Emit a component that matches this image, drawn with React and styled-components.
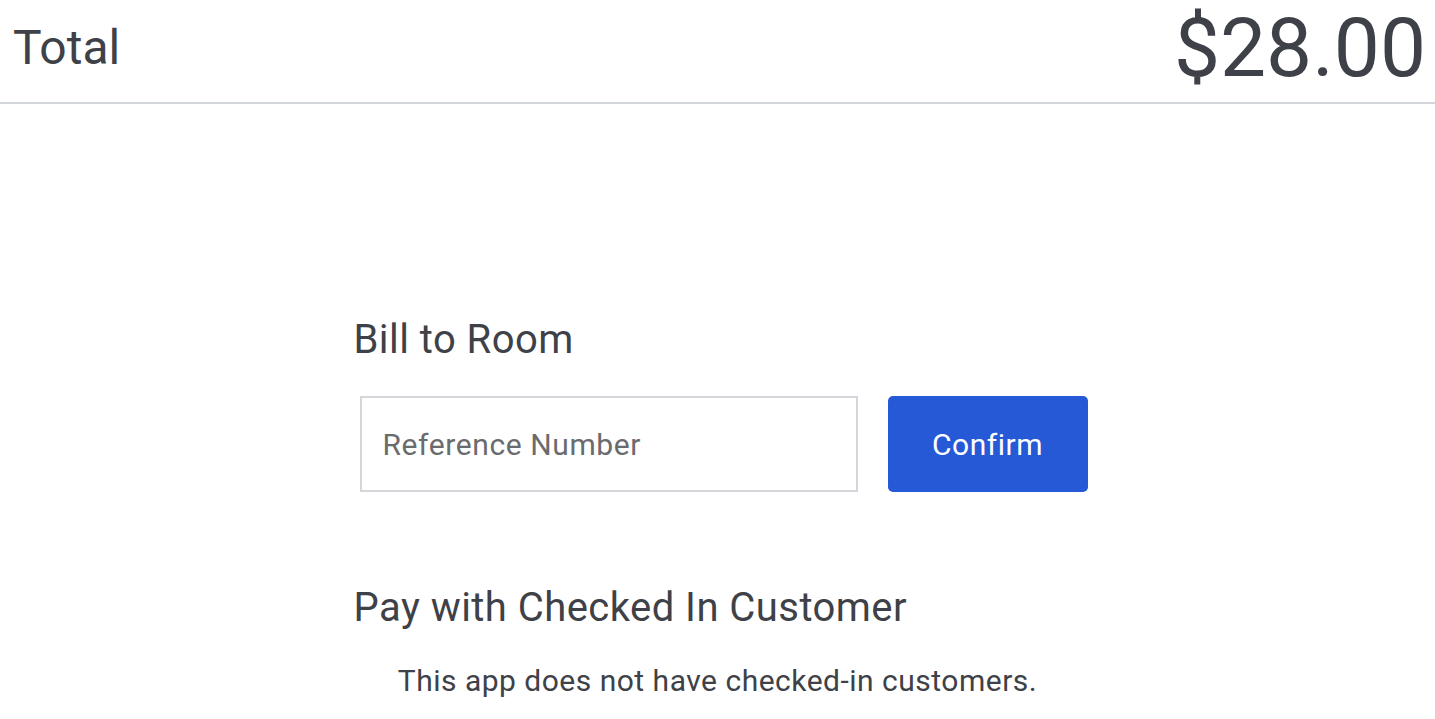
import React from 'react';
import styled, { createGlobalStyle } from 'styled-components';

const GlobalStyle = createGlobalStyle`
    html, body {
        margin: 0;
        padding: 0;
        background: #ffffff;
        font-family: Roboto, "Liberation Sans", Arial, sans-serif;
        color: #3e4147;
    }
    * { box-sizing: border-box; }
`

const Header = styled.header`
    display: flex;
    justify-content: space-between;
    align-items: center;
    padding: 0 9px 6px 13px;
    border-bottom: 2px solid #d3d6da;
`

const TotalLabel = styled.h1`
    margin: 0;
    font-size: 48px;
    line-height: 56px;
    font-weight: 400;
    color: #3e4147;
`

const Amount = styled.div`
    font-size: 82px;
    line-height: 96px;
    font-weight: 400;
    color: #3e4147;
`

const Main = styled.main`
    width: 740px;
    margin: 0 auto;
    padding-top: 212px;
`

const SectionTitle = styled.h2`
    margin: ${props => props.$top || 0}px 0 0;
    padding-left: 6px;
    font-size: 40px;
    line-height: 47px;
    font-weight: 400;
    letter-spacing: 0.45px;
    color: #3e4147;
`

const FormRow = styled.form`
    display: flex;
    gap: 30px;
    margin-top: 33px;
    padding-left: 12px;
`

const RefInput = styled.input`
    width: 498px;
    height: 96px;
    padding: 0 21px;
    border: 2px solid #d3d6da;
    border-radius: 0;
    font-family: inherit;
    font-size: 30px;
    letter-spacing: 0.6px;
    color: #3e4147;
    outline: none;

    &::placeholder {
        color: #6a6b6d;
    }
`

const ConfirmButton = styled.button`
    width: 200px;
    height: 96px;
    border: none;
    border-radius: 5px;
    background: #2659d6;
    color: #ffffff;
    font-family: inherit;
    font-size: 30px;
    letter-spacing: 0.5px;
    cursor: pointer;
`

const EmptyNote = styled.p`
    margin: 32px 0 0;
    text-align: center;
    font-size: 30px;
    line-height: 35px;
    letter-spacing: 0.5px;
    color: #3e4147;
`

const App = () => {
    return (
        <>
            <GlobalStyle />
            <Header>
                <TotalLabel>Total</TotalLabel>
                <Amount>$28.00</Amount>
            </Header>
            <Main>
                <SectionTitle>Bill to Room</SectionTitle>
                <FormRow onSubmit={e => e.preventDefault()}>
                    <RefInput type="text" placeholder="Reference Number" />
                    <ConfirmButton type="submit">Confirm</ConfirmButton>
                </FormRow>
                <SectionTitle $top={92}>Pay with Checked In Customer</SectionTitle>
                <EmptyNote>This app does not have checked-in customers.</EmptyNote>
            </Main>
        </>
    )
}

export default App;
